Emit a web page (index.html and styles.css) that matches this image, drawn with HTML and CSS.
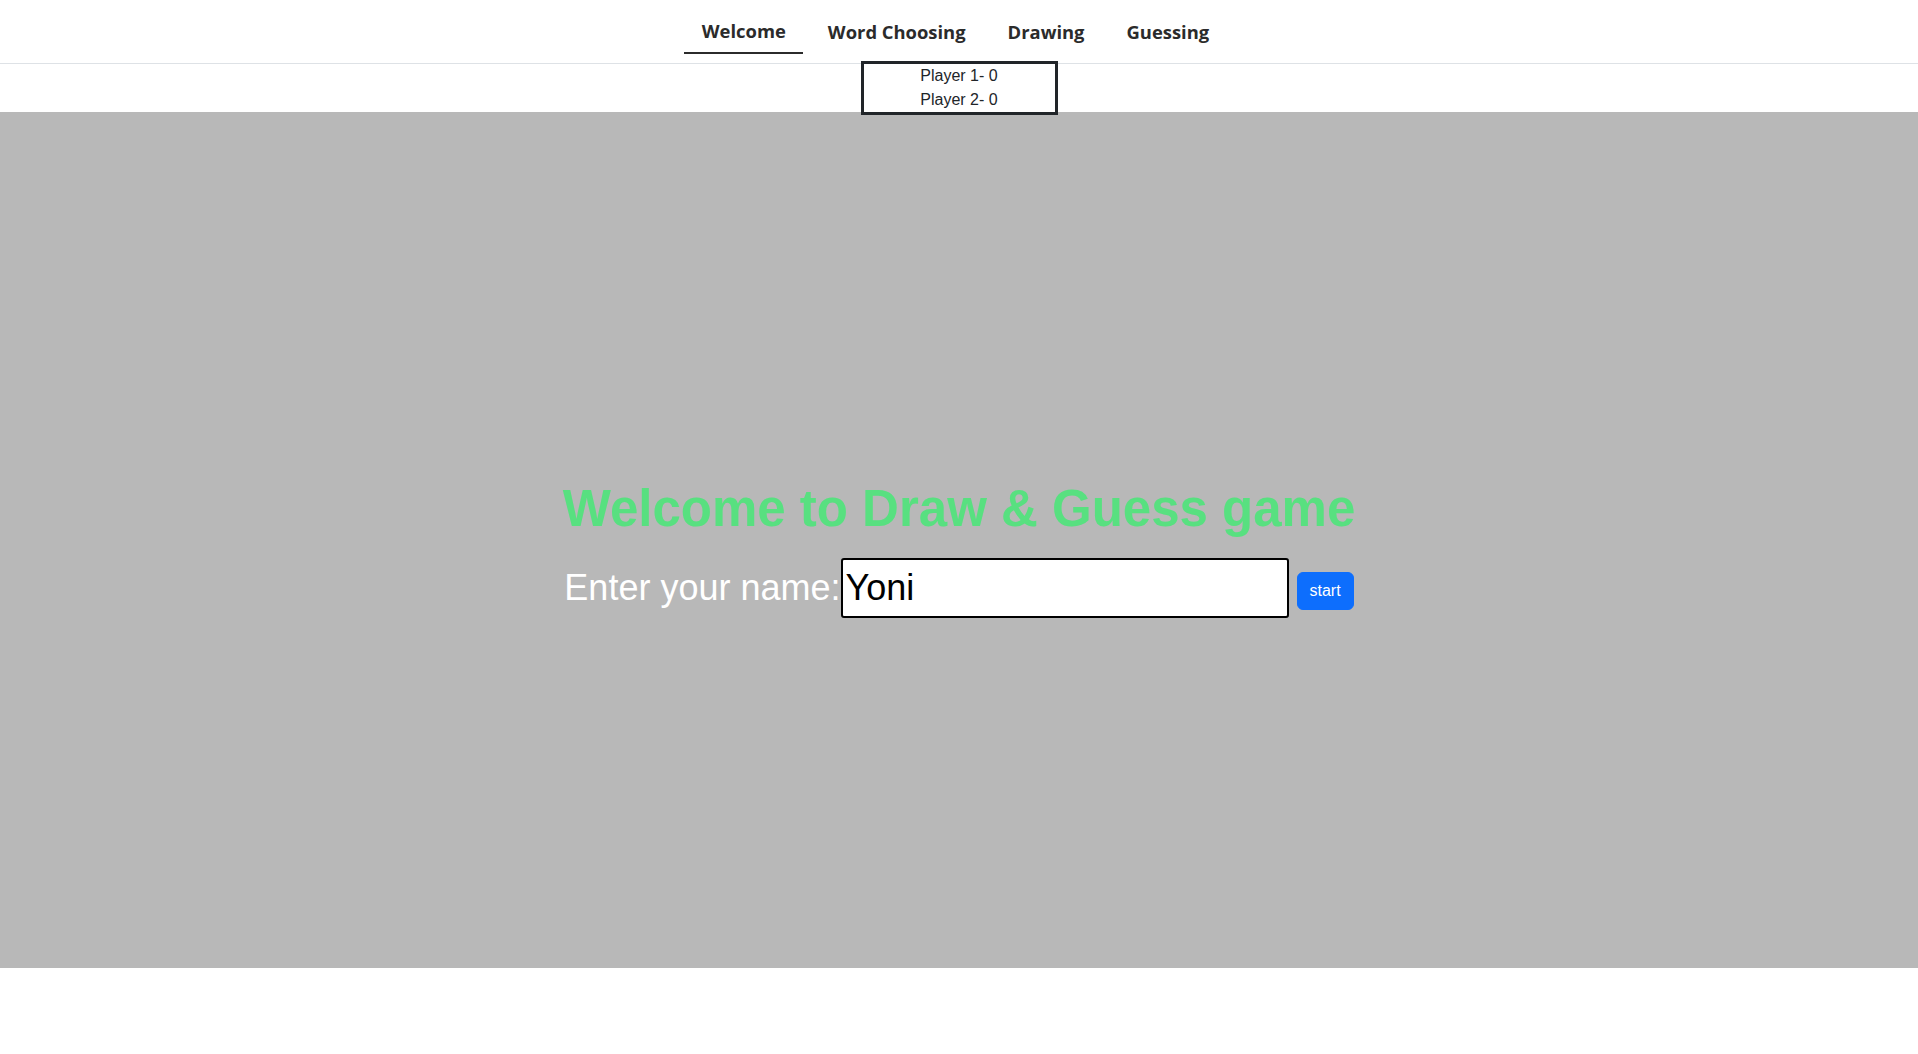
FILE: index.html
```html
<!DOCTYPE html>
<html lang="en">
<head>
<meta charset="utf-8">
<title>Draw &amp; Guess</title>
<link rel="stylesheet" href="styles.css">
</head>
<body>
<header class="topbar">
  <nav class="tabs">
    <a class="tab tab-active" href="#">Welcome</a>
    <a class="tab" href="#">Word Choosing</a>
    <a class="tab" href="#">Drawing</a>
    <a class="tab" href="#">Guessing</a>
  </nav>
  <div class="score-row">
    <div class="score">
      <div class="score-line">Player 1- 0</div>
      <div class="score-line">Player 2- 0</div>
    </div>
  </div>
</header>
<main class="stage">
  <h1 class="title">Welcome to Draw &amp; Guess game</h1>
  <form class="name-form" onsubmit="return false;">
    <label class="name-label" for="name">Enter your name:</label>
    <input class="name-input" id="name" type="text" value="Yoni" autofocus>
    <button class="start-btn" type="submit">start</button>
  </form>
</main>
<footer class="bottom"></footer>
</body>
</html>
```

FILE: styles.css
```css
* { box-sizing: border-box; }
html, body { margin: 0; padding: 0; }
body {
  width: 1918px;
  height: 1054px;
  background: #fff;
  font-family: "Liberation Sans", Arial, sans-serif;
  color: #212529;
  overflow: hidden;
}
.topbar {
  height: 112px;
}
.tabs {
  height: 64px;
  border-bottom: 1px solid #dee2e6;
  display: flex;
  justify-content: center;
  align-items: flex-start;
  padding-right: 7px;
}
.tab {
  display: block;
  margin: 0 3.5px;
  padding: 20px 17.5px 8px;
  line-height: 24px;
  font-family: "Open Sans", "Noto Sans", sans-serif;
  font-weight: 700;
  font-size: 18.4px;
  color: #2b2b2b;
  text-decoration: none;
  border-bottom: 2px solid transparent;
}
.tab-active {
  border-bottom-color: #2b2b2b;
  padding-top: 19px;
  padding-bottom: 9px;
}
.score-row {
  height: 48px;
  display: flex;
  justify-content: center;
}
.score {
  position: relative;
  z-index: 1;
  margin-top: -3px;
  width: 197px;
  height: 54px;
  border: 3px solid #212529;
  background: #fff;
  text-align: center;
  font-size: 16px;
  line-height: 24px;
  color: #212529;
}
.stage {
  height: 856px;
  background: #b8b8b8;
  display: flex;
  flex-direction: column;
  align-items: center;
  justify-content: center;
  padding-top: 16px;
}
.title {
  margin: 0 0 20px;
  font-family: "Liberation Sans", Arial, sans-serif;
  font-weight: 700;
  font-size: 51px;
  line-height: normal;
  color: #58e080;
}
.name-form {
  display: flex;
  align-items: center;
  margin: 0;
}
.name-label {
  font-size: 36px;
  line-height: normal;
  color: #fff;
}
.name-input {
  width: 448px;
  height: 60px;
  margin: 0;
  padding: 0 3px;
  border: 2px solid #000;
  border-radius: 3px;
  outline: none;
  background: #fff;
  font-family: "Liberation Sans", Arial, sans-serif;
  font-size: 36px;
  color: #000;
  caret-color: #000;
}
.start-btn {
  margin: 6px 0 0 8px;
  height: 38px;
  padding: 6px 12px;
  border: 1px solid #0d6efd;
  border-radius: 6px;
  background: #0d6efd;
  color: #fff;
  font-family: "Liberation Sans", Arial, sans-serif;
  font-size: 16px;
  line-height: 24px;
  cursor: pointer;
}
.bottom {
  height: 86px;
}
```
